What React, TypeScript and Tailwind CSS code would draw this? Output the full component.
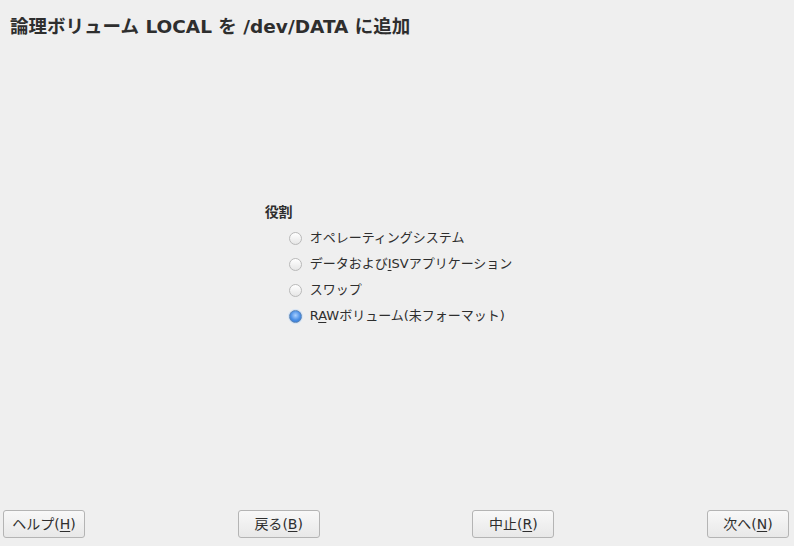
import React from "react";

const font = { fontFamily: '"DejaVu Sans", "Noto Sans CJK JP", sans-serif' };

function Radio({ checked }: { checked?: boolean }) {
  return (
    <span
      className={
        "inline-block w-[13px] h-[13px] rounded-full border " +
        (checked
          ? "border-[#5b86b8] bg-[radial-gradient(circle_at_50%_40%,#a9d0ff_0%,#4a8fe6_55%,#2e6ec4_100%)] shadow-[0_0_0_1px_#d6e4f5]"
          : "border-[#b9b9b9] bg-[linear-gradient(#ffffff,#e6e6e6)]")
      }
    />
  );
}

const options = [
  { label: <>オペレーティングシステム</> },
  { label: <>データおよび<span className="underline underline-offset-2">I</span>SVアプリケーション</> },
  { label: <>スワップ</> },
  { label: <>R<span className="underline underline-offset-2">A</span>Wボリューム(未フォーマット)</>, checked: true },
];

function Btn({ text, k }: { text: string; k: string }) {
  return (
    <button className="w-[82px] h-[28px] rounded-[3px] border border-[#b4b4b4] bg-[linear-gradient(#f8f8f8,#e8e8e8)] text-[14px] text-[#2e2e2e] flex items-center justify-center">
      {text}(<span className="underline underline-offset-2">{k}</span>)
    </button>
  );
}

export default function App() {
  return (
    <div className="w-[794px] h-[546px] bg-[#efefef] flex flex-col text-[#2e2e2e]" style={font}>
      <div className="pl-[10px] pt-[14px] text-[18.5px] font-bold leading-[26px]">
        論理ボリューム LOCAL を /dev/DATA に追加
      </div>
      <div className="flex-1 flex items-center justify-center">
        <div className="flex flex-col pr-[17px] mb-[22px]">
          <div className="text-[14px] font-bold leading-[20px] mb-[6px]">役割</div>
          <div className="flex flex-col gap-[6px] pl-[24px]">
            {options.map((o, i) => (
              <label key={i} className="flex items-center gap-[8px] h-[20px] text-[13px]">
                <Radio checked={o.checked} />
                <span>{o.label}</span>
              </label>
            ))}
          </div>
        </div>
      </div>
      <div className="flex justify-between pl-[3px] pr-[5px] pb-[8px]">
        <Btn text="ヘルプ" k="H" />
        <Btn text="戻る" k="B" />
        <Btn text="中止" k="R" />
        <Btn text="次へ" k="N" />
      </div>
    </div>
  );
}
